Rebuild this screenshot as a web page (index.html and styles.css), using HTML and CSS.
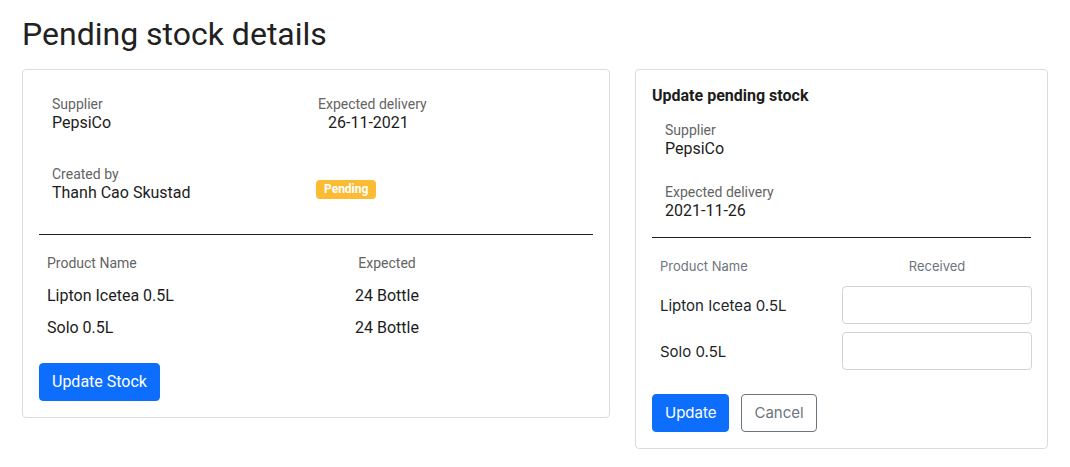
FILE: index.html
```html
<!DOCTYPE html>
<html lang="en">
<head>
<meta charset="utf-8">
<title>Pending stock details</title>
<link rel="stylesheet" href="styles.css">
</head>
<body>
<main class="page">
  <h1 class="page-title">Pending stock details</h1>
  <div class="cards">
    <section class="card card-details">
      <div class="info">
        <div class="field">
          <div class="label">Supplier</div>
          <div class="value">PepsiCo</div>
        </div>
        <div class="field field-right">
          <div class="label">Expected delivery</div>
          <div class="value value-indent">26-11-2021</div>
        </div>
        <div class="field">
          <div class="label">Created by</div>
          <div class="value">Thanh Cao Skustad</div>
        </div>
        <div class="field field-badge">
          <span class="badge">Pending</span>
        </div>
      </div>
      <div class="divider"></div>
      <div class="table">
        <div class="th">Product Name</div>
        <div class="th th-center">Expected</div>
        <div class="td">Lipton Icetea 0.5L</div>
        <div class="td td-center">24 Bottle</div>
        <div class="td">Solo 0.5L</div>
        <div class="td td-center">24 Bottle</div>
      </div>
      <button class="btn btn-primary btn-roboto">Update Stock</button>
    </section>

    <section class="card card-update">
      <h2 class="card-title">Update pending stock</h2>
      <div class="info-stack">
        <div class="field">
          <div class="label">Supplier</div>
          <div class="value">PepsiCo</div>
        </div>
        <div class="field">
          <div class="label">Expected delivery</div>
          <div class="value">2021-11-26</div>
        </div>
      </div>
      <div class="divider"></div>
      <div class="form-table">
        <div class="fth">Product Name</div>
        <div class="fth fth-center">Received</div>
        <div class="ftd">Lipton Icetea 0.5L</div>
        <input class="form-control" type="text">
        <div class="ftd">Solo 0.5L</div>
        <input class="form-control" type="text">
      </div>
      <div class="actions">
        <button class="btn btn-primary">Update</button>
        <button class="btn btn-outline">Cancel</button>
      </div>
    </section>
  </div>
</main>
</body>
</html>
```

FILE: styles.css
```css
* { box-sizing: border-box; }

html, body {
  margin: 0;
  padding: 0;
  background: #ffffff;
  color: #212121;
  font-family: Roboto, "Liberation Sans", sans-serif;
}

.page {
  padding: 15px 22px 0 22px;
}

.page-title {
  margin: 0 0 16px 0;
  font-size: 32px;
  line-height: 38px;
  font-weight: 400;
  color: #212121;
}

.cards {
  display: grid;
  grid-template-columns: 588px 413px;
  column-gap: 25px;
  align-items: start;
}

.card {
  border: 1px solid #dcdcdc;
  border-radius: 4px;
  padding: 16px;
  background: #fff;
}

/* ---------- left card ---------- */
.info {
  display: grid;
  grid-template-columns: 1fr 1fr;
  row-gap: 33px;
  padding: 9px 13px 32px 13px;
}

.label {
  font-size: 14px;
  line-height: 18px;
  color: #646464;
}

.value {
  font-size: 16px;
  line-height: 19px;
  color: #1c1c1c;
}

.field-right .label { padding-left: 2px; }
.value-indent { padding-left: 12px; }

.field-badge { padding-top: 13px; }

.badge {
  display: inline-block;
  background: #fbbb33;
  color: #ffffff;
  font-size: 12px;
  font-weight: 700;
  line-height: 19px;
  padding: 0 8px;
  border-radius: 4px;
}

.divider {
  height: 1px;
  background: #1f1f1f;
}

.table {
  display: grid;
  grid-template-columns: 142px 1fr;
  grid-auto-rows: 32px;
  margin-top: 12px;
  align-items: center;
}

.th {
  font-size: 14px;
  color: #646464;
  padding-left: 8px;
}

.td {
  font-size: 16px;
  color: #1c1c1c;
  padding-left: 8px;
}

.th-center, .td-center {
  text-align: center;
  padding-left: 0;
}

.btn {
  display: inline-block;
  font-size: 15px;
  line-height: 24px;
  padding: 6px 12px;
  border-radius: 4px;
  border: 1px solid transparent;
  cursor: pointer;
  font-family: Inter, "Liberation Sans", sans-serif;
}

.btn-roboto {
  font-family: Roboto, "Liberation Sans", sans-serif;
  font-size: 16px;
}

.btn-primary {
  background: #0d6efd;
  border-color: #0d6efd;
  color: #ffffff;
}

.card-details .btn { margin-top: 20px; }

/* ---------- right card ---------- */
.card-title {
  margin: 0;
  font-size: 16px;
  line-height: 19px;
  font-weight: 700;
  color: #1c1c1c;
}

.info-stack {
  display: flex;
  flex-direction: column;
  gap: 25px;
  padding: 16px 13px 17px 13px;
}

.form-table {
  display: grid;
  grid-template-columns: 190px 190px;
  margin-top: 18px;
  row-gap: 8px;
  align-items: center;
  font-family: Inter, "Liberation Sans", sans-serif;
}

.fth {
  font-size: 13px;
  line-height: 20px;
  color: #6c757d;
  padding-left: 8px;
  margin-bottom: 2px;
}

.fth-center {
  text-align: center;
  padding-left: 0;
}

.ftd {
  font-size: 15px;
  color: #212529;
  padding-left: 8px;
}

.form-control {
  display: block;
  width: 100%;
  height: 38px;
  border: 1px solid #ced4da;
  border-radius: 4px;
  padding: 6px 12px;
  font-size: 16px;
  background: #fff;
}

.actions {
  display: flex;
  gap: 12px;
  margin-top: 24px;
}

.btn-outline {
  background: #ffffff;
  border-color: #6c757d;
  color: #6c757d;
}
```
